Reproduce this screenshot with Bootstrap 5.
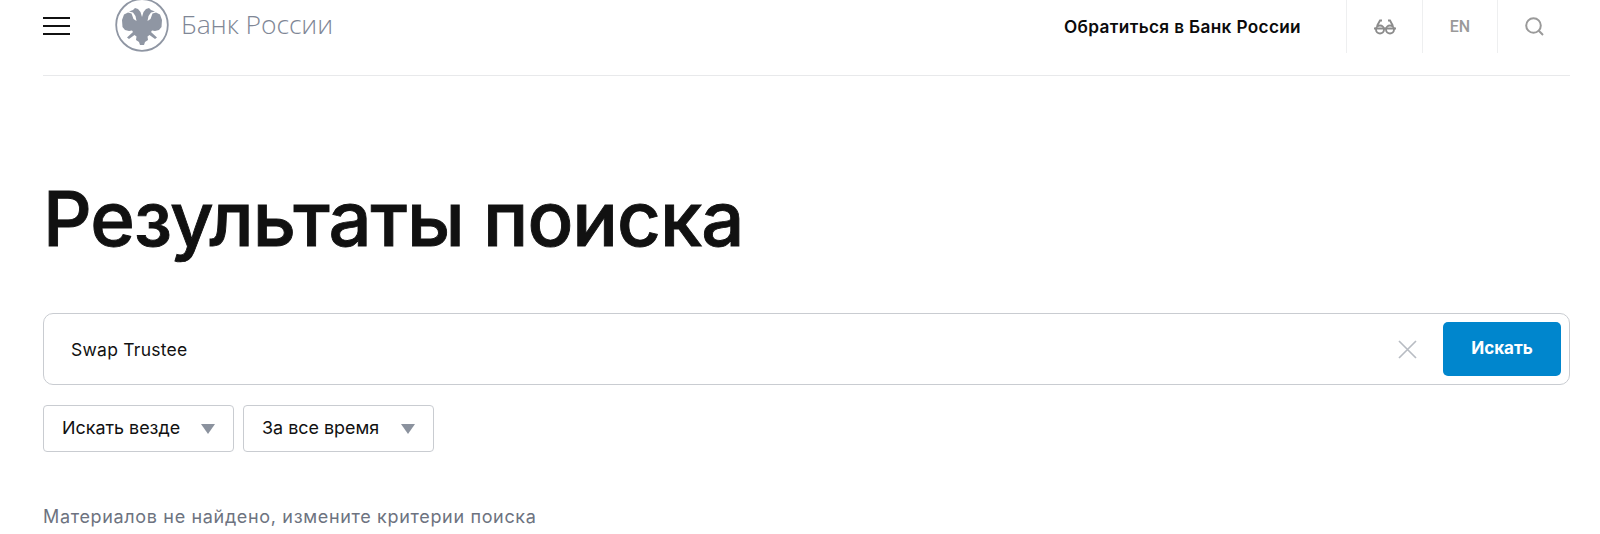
<!DOCTYPE html>
<html lang="ru">
<head>
  <meta charset="UTF-8" />
  <meta name="viewport" content="width=device-width, initial-scale=1.0" />
  <title>Результаты поиска</title>
  <link href="https://cdn.jsdelivr.net/npm/bootstrap@5.3.0/dist/css/bootstrap.min.css" rel="stylesheet" />
  <style>
    body { font-family: Inter, "Noto Sans", sans-serif; background: #fff; color: #111; overflow: hidden; }
    .page-wrap { padding: 0 30px 0 43px; }
    .top-bar { height: 76px; border-bottom: 1px solid #e8e9eb; }
    .burger { width: 27px; padding: 0; border: 0; background: none; margin-top: -2px; }
    .burger span { display: block; height: 2px; background: #111; margin-bottom: 6px; }
    .burger span:last-child { margin-bottom: 0; }
    .logo-link { margin-left: 45px; margin-top: -1px; text-decoration: none; }
    .logo-link svg { margin-top: -3px; }
    .logo-text { font-family: "Open Sans", sans-serif; font-weight: 300; font-size: 26.5px; letter-spacing: -.1px; margin-left: 12px; color: #7f8796; margin-top: -2px; }
    .contact-link { font-weight: 600; font-size: 17.2px; letter-spacing: .35px; color: #0b0b0b; text-decoration: none; margin-right: 45px; }
    .tool-cell { width: 75px; height: 53px; border-left: 1px solid #eeeff0; color: #9a9a9a; }
    .tool-cell.wide-cell { width: 76px; }
    .tool-cell.last-cell { width: 73px; }
    .tool-en { font-family: Roboto, sans-serif; font-weight: 500; font-size: 16px; }
    .page-title { font-size: 76px; font-weight: 500; -webkit-text-stroke: .9px #111; letter-spacing: -1px; line-height: 92px; margin: 96px 0 0 0; color: #111; }
    .search-box { height: 72px; margin-top: 49px; border: 1px solid #c9ccd1; border-radius: 10px; padding: 2px 8px 0 27px; }
    .search-input { border: 0; outline: 0; flex: 1; font-size: 17.5px; letter-spacing: .25px; font-family: Inter, sans-serif; color: #111; padding: 0; background: none; }
    .search-clear { border: 0; background: none; padding: 0; margin: -2px 26px 0 0; line-height: 0; }
    .search-go { width: 118px; height: 54px; margin-top: -2px; background: #0086cd; color: #fff; font-weight: 700; font-size: 17px; border: 0; border-radius: 5px; }
    .search-go:hover { background: #0079b9; color: #fff; }
    .filter-row { margin-top: 20px; gap: 9px; }
    .filter-btn { height: 47px; width: 191px; border: 1px solid #c9ccd1; border-radius: 4px; background: #fff; padding: 0 18px; font-size: 17.9px; color: #111; }
    .filter-caret { width: 0; height: 0; border-left: 7.5px solid transparent; border-right: 7.5px solid transparent; border-top: 10px solid #8b929e; }
    .empty-note { margin: 53px 0 0 0; font-size: 18px; letter-spacing: .66px; color: #6d7380; line-height: 24px; }
  </style>
</head>
<body>
  <div class="page-wrap">
    <!-- Header -->
    <header class="top-bar d-flex align-items-start">
      <div class="d-flex align-items-center" style="height:53px">
        <button class="burger" type="button" aria-label="Меню"><span></span><span></span><span></span></button>
        <a class="logo-link d-flex align-items-center" href="#">
          <svg width="54" height="54" viewBox="0 0 54 54">
            <circle cx="27" cy="27" r="25.8" fill="none" stroke="#8f96a3" stroke-width="1.8"/>
            <g fill="#8f96a3">
              <path id="eagleHalf" d="M27 19L25.5 14 23 11 20 10 18 12 14 13.5 18 14.5 20.5 18 21.5 23 18.5 21 16.5 15.5 13 14.5 9 16.500 7 22 7.5 29 10 32 14 33 17 32.5 18 34 12 39.5 14 41 19.5 37 21.5 38.5 21 42 24 44 25 47 27 47z"/>
              <use href="#eagleHalf" transform="matrix(-1 0 0 1 54 0)"/>
            </g>
          </svg>
          <span class="logo-text">Банк России</span>
        </a>
      </div>
      <div class="d-flex align-items-center ms-auto">
        <a class="contact-link" href="#">Обратиться в Банк России</a>
        <div class="tool-cell wide-cell d-flex align-items-center justify-content-center">
          <svg width="22" height="16" viewBox="0 0 22 16" fill="none" stroke="#8c8c8c" stroke-width="1.9">
            <circle cx="6" cy="10.5" r="4"/><circle cx="16" cy="10.5" r="4"/>
            <path d="M0 9.5h22M3 7l3-5.5h2M19 7L16 1.5h-2"/>
          </svg>
        </div>
        <div class="tool-cell tool-en d-flex align-items-center justify-content-center">EN</div>
        <div class="tool-cell last-cell d-flex align-items-center justify-content-center">
          <svg width="19" height="19" viewBox="0 0 19 19" fill="none" stroke="#9a9a9a" stroke-width="2">
            <circle cx="8.5" cy="8.5" r="7.3"/><path d="M13.8 13.8L18 18"/>
          </svg>
        </div>
      </div>
    </header>

    <h1 class="page-title">Результаты поиска</h1>

    <!-- Search -->
    <form class="search-box d-flex align-items-center" onsubmit="return false">
      <input class="search-input" type="text" value="Swap Trustee" aria-label="Поиск" />
      <button class="search-clear" type="button" aria-label="Очистить">
        <svg width="19" height="19" viewBox="0 0 19 19" fill="none" stroke="#b8bcc3" stroke-width="1.7"><path d="M1 1l17 17M18 1L1 18"/></svg>
      </button>
      <button class="btn search-go" type="submit">Искать</button>
    </form>

    <div class="filter-row d-flex">
      <button class="btn filter-btn d-flex align-items-center justify-content-between" type="button">Искать везде <span class="filter-caret"></span></button>
      <button class="btn filter-btn d-flex align-items-center justify-content-between" type="button">За все время <span class="filter-caret"></span></button>
    </div>

    <p class="empty-note">Материалов не найдено, измените критерии поиска</p>
  </div>
  <script src="https://cdn.jsdelivr.net/npm/bootstrap@5.3.0/dist/js/bootstrap.bundle.min.js"></script>
</body>
</html>
